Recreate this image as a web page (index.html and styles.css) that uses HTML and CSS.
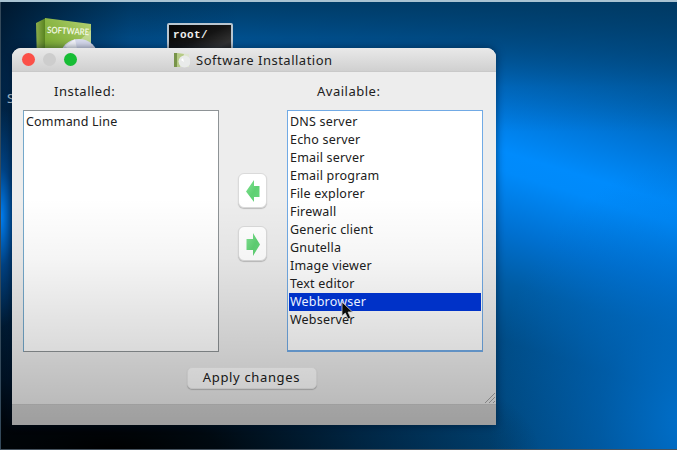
FILE: index.html
```html
<!DOCTYPE html>
<html lang="en">
<head>
<meta charset="utf-8">
<title>Software Installation</title>
<link rel="stylesheet" href="styles.css">
</head>
<body>
<main class="desktop">
  <svg class="box-icon" width="66" height="44" viewBox="0 0 66 44">
    <defs>
      <linearGradient id="side" x1="0" x2="1"><stop offset="0" stop-color="#8cad4c"/><stop offset="1" stop-color="#527e1b"/></linearGradient>
      <linearGradient id="front" x1="0" y1="1" x2="1" y2="0"><stop offset="0" stop-color="#71a329"/><stop offset=".55" stop-color="#8fb949"/><stop offset="1" stop-color="#b5d276"/></linearGradient>
    </defs>
    <path d="M1 5 11 0v44H2z" fill="url(#side)"/>
    <path d="M10 0 56 6v38H10z" fill="url(#front)"/>
    <path d="M56 12 36 30 27 44h29z" fill="#d5e5b0" opacity=".6"/>
    <ellipse cx="44" cy="39" rx="19" ry="18" fill="#d8dcee"/>
    <path d="M30 28 44 41 40 21z" fill="#fff" opacity=".7"/>
    <text x="12" y="15" textLength="42" lengthAdjust="spacingAndGlyphs" transform="rotate(3 12 15)" class="box-text">SOFTWARE</text>
  </svg>
  <div class="terminal">root/</div>
  <div class="icon-label">Software</div>

  <section class="window">
    <header class="titlebar">
      <div class="lights"><i class="light close"></i><i class="light minimize"></i><i class="light maximize"></i></div>
      <svg class="title-icon" width="16" height="16" viewBox="0 0 16 16">
        <path d="M0 1h3v14H0z" fill="#78944a"/><path d="M3 1 15 2v13H3z" fill="#dee5cf"/><path d="m3 1 7 1-4 13H3z" fill="#b6cb86"/>
        <circle cx="10.5" cy="9.5" r="6" fill="#e9ebea"/><path d="m7 8 3 2-1-4z" fill="#fff"/>
      </svg>
      <h1 class="title">Software Installation</h1>
    </header>
    <div class="content">
      <div class="column">
        <h2 class="heading installed-heading">Installed:</h2>
        <ul class="list installed"><li>Command Line</li></ul>
      </div>
      <div class="transfer">
        <button class="arrow-button" aria-label="Install">
          <svg width="14" height="24" viewBox="0 0 14 24"><defs><linearGradient id="green" x1="0" y1="0" x2="1" y2="1"><stop offset="0" stop-color="#83e494"/><stop offset=".55" stop-color="#5fd073"/><stop offset="1" stop-color="#69d77e"/></linearGradient></defs><path d="M0 12.5 8 1V7h5.5v11H8v5z" fill="url(#green)"/></svg>
        </button>
        <button class="arrow-button" aria-label="Remove">
          <svg width="14" height="24" viewBox="0 0 14 24"><path d="M14 12.5 7 1V7H.5v11H7v6z" fill="url(#green)"/></svg>
        </button>
      </div>
      <div class="column">
        <h2 class="heading available-heading">Available:</h2>
        <ul class="list available">
          <li>DNS server</li><li>Echo server</li><li>Email server</li><li>Email program</li><li>File explorer</li><li>Firewall</li><li>Generic client</li><li>Gnutella</li><li>Image viewer</li><li>Text editor</li><li class="selected">Webbrowser</li><li>Webserver</li>
        </ul>
      </div>
    </div>
    <div class="actions">
      <button class="apply">Apply changes</button>
      <svg class="grip" width="12" height="12" viewBox="0 0 12 12"><path d="M1 11 11 1M5 11l6-6M9 11l2-2" stroke="#a5a5a5" stroke-width="1"/></svg>
    </div>
    <footer class="bottom"></footer>
  </section>
  <svg class="cursor" width="13" height="20" viewBox="0 0 13 20"><path d="M1 1v14l3.3-3 2.7 6 2.6-1.2L7 11h4.5z" fill="#090909" stroke="#ccc" stroke-width=".8"/></svg>
</main>
</body>
</html>
```

FILE: styles.css
```css
* { box-sizing: border-box; }
body { margin: 0; font-family: "Noto Sans", "Open Sans", sans-serif; font-size: 13px; color: #202020; }
h1, h2, ul { margin: 0; padding: 0; font-weight: 400; }
button { padding: 0; border: 0; font: inherit; color: inherit; }
.desktop {
  position: relative; width: 677px; height: 450px; overflow: hidden;
  border-top: 2px solid #a9c3d2; border-bottom: 1px solid #45525e;
  background:
    linear-gradient(90deg, #34495a 1px, transparent 1px),
    radial-gradient(ellipse 430px 130px at 110px 448px, #000 0%, rgba(0,0,0,.85) 25%, rgba(0,10,20,.5) 60%, transparent 100%),
    radial-gradient(ellipse 34px 110px at 0 215px, #0080f5 0%, rgba(0,90,180,.6) 45%, transparent 100%),
    linear-gradient(90deg, rgba(0,8,20,.7) 0, rgba(0,15,35,.15) 130px, transparent 240px),
    linear-gradient(rgba(0,58,100,.95) 0, rgba(0,66,116,.75) 40px, rgba(0,75,135,.3) 85px, transparent 130px),
    radial-gradient(ellipse 200px 260px at 690px 420px, #0070cc 0%, rgba(0,108,200,.5) 45%, transparent 100%),
    linear-gradient(197deg, #003c68 0%, #004f8c 7%, #0064b4 16%, #0078dc 24%, #008bfc 31%, #008afa 34%, #0070d0 43%, #005ca4 51%, #004c86 60%, #004578 75%, #003c6c 100%);
}
.box-icon { position: absolute; left: 35px; top: 16px; }
.box-text { font: 700 9px Lato, sans-serif; fill: #eef5df; }
.terminal {
  position: absolute; left: 167px; top: 21px; width: 66px; height: 44px; padding: 4px;
  border: 2px solid #b9c6d0; border-radius: 2px; background: linear-gradient(155deg, #050505, #141414 40%, #333 65%, #111);
  color: #eee; font: 700 11px/12px "Liberation Mono", monospace; letter-spacing: .4px;
}
.icon-label { position: absolute; left: 7px; top: 87px; color: #b9cede; }
.window {
  position: absolute; z-index: 0; left: 12px; top: 46px; width: 484px; height: 377px; overflow: hidden;
  display: flex; flex-direction: column; border-radius: 9px 9px 0 0; background: #ededed;
  box-shadow: 0 0 9px rgba(0,15,35,.6);
}
.window::after {
  content: ""; position: absolute; inset: 0; pointer-events: none;
  background: linear-gradient(transparent 150px, rgba(0,0,0,.04) 210px, rgba(0,0,0,.14) 300px, rgba(0,0,0,.21) 356px, rgba(0,0,0,.24));
}
.titlebar {
  flex: 0 0 24px; display: flex; align-items: center; padding-left: 10px;
  border-bottom: 1px solid #c9c9c9; background: linear-gradient(#e9e9e9, #d0d0d0);
}
.lights { display: flex; gap: 8px; width: 152px; }
.light { width: 13px; height: 13px; border-radius: 50%; }
.close { background: #fb5048; }
.minimize { background: #cdcdcd; }
.maximize { background: #17bd35; }
.title { margin-left: 6px; font-size: 13px; line-height: 22px; letter-spacing: .5px; }
.content { flex: 0 0 280px; display: grid; grid-template-columns: 196px 68px 196px; padding-left: 11px; }
.column { display: flex; flex-direction: column; }
.heading { height: 38px; font-size: 13px; line-height: 38px; letter-spacing: .5px; }
.installed-heading { padding-left: 31px; }
.available-heading { padding-left: 30px; }
.list { height: 242px; list-style: none; padding: 2px 1px; border: 1px solid #8e9396; background: #fff; font-size: 12.5px; line-height: 18px; letter-spacing: .2px; }
.list li { height: 18px; padding-left: 1px; white-space: nowrap; }
.installed { border-left-color: #74a8cb; }
.available { border-color: #71aae5; border-bottom-width: 2px; }
.list .selected { position: relative; z-index: 1; background: #0032c8; color: #e9f0ff; }
.transfer { display: flex; flex-direction: column; align-items: center; padding: 101px 1px 0 0; gap: 18px; }
.arrow-button { width: 29px; height: 35px; display: grid; place-items: center; border: 1px solid #dadada; border-radius: 6px; background: #fff; box-shadow: 0 1px 1px #bcbcbc; }
.actions { flex: 0 0 52px; position: relative; display: flex; justify-content: center; align-items: flex-start; padding-top: 15px; padding-right: 5px; }
.apply { width: 130px; height: 22px; padding-bottom: 2px; border: 1px solid #eee; border-radius: 5px; background: #fff; box-shadow: 0 1px 1px #bdbdbd; line-height: 18px; letter-spacing: .65px; }
.grip { position: absolute; right: 0; bottom: 0; }
.bottom { flex: 1; border-top: 1px solid #c9c9c9; background: #d0d0d0; }
.cursor { position: absolute; z-index: 1; left: 341px; top: 299px; }
```
